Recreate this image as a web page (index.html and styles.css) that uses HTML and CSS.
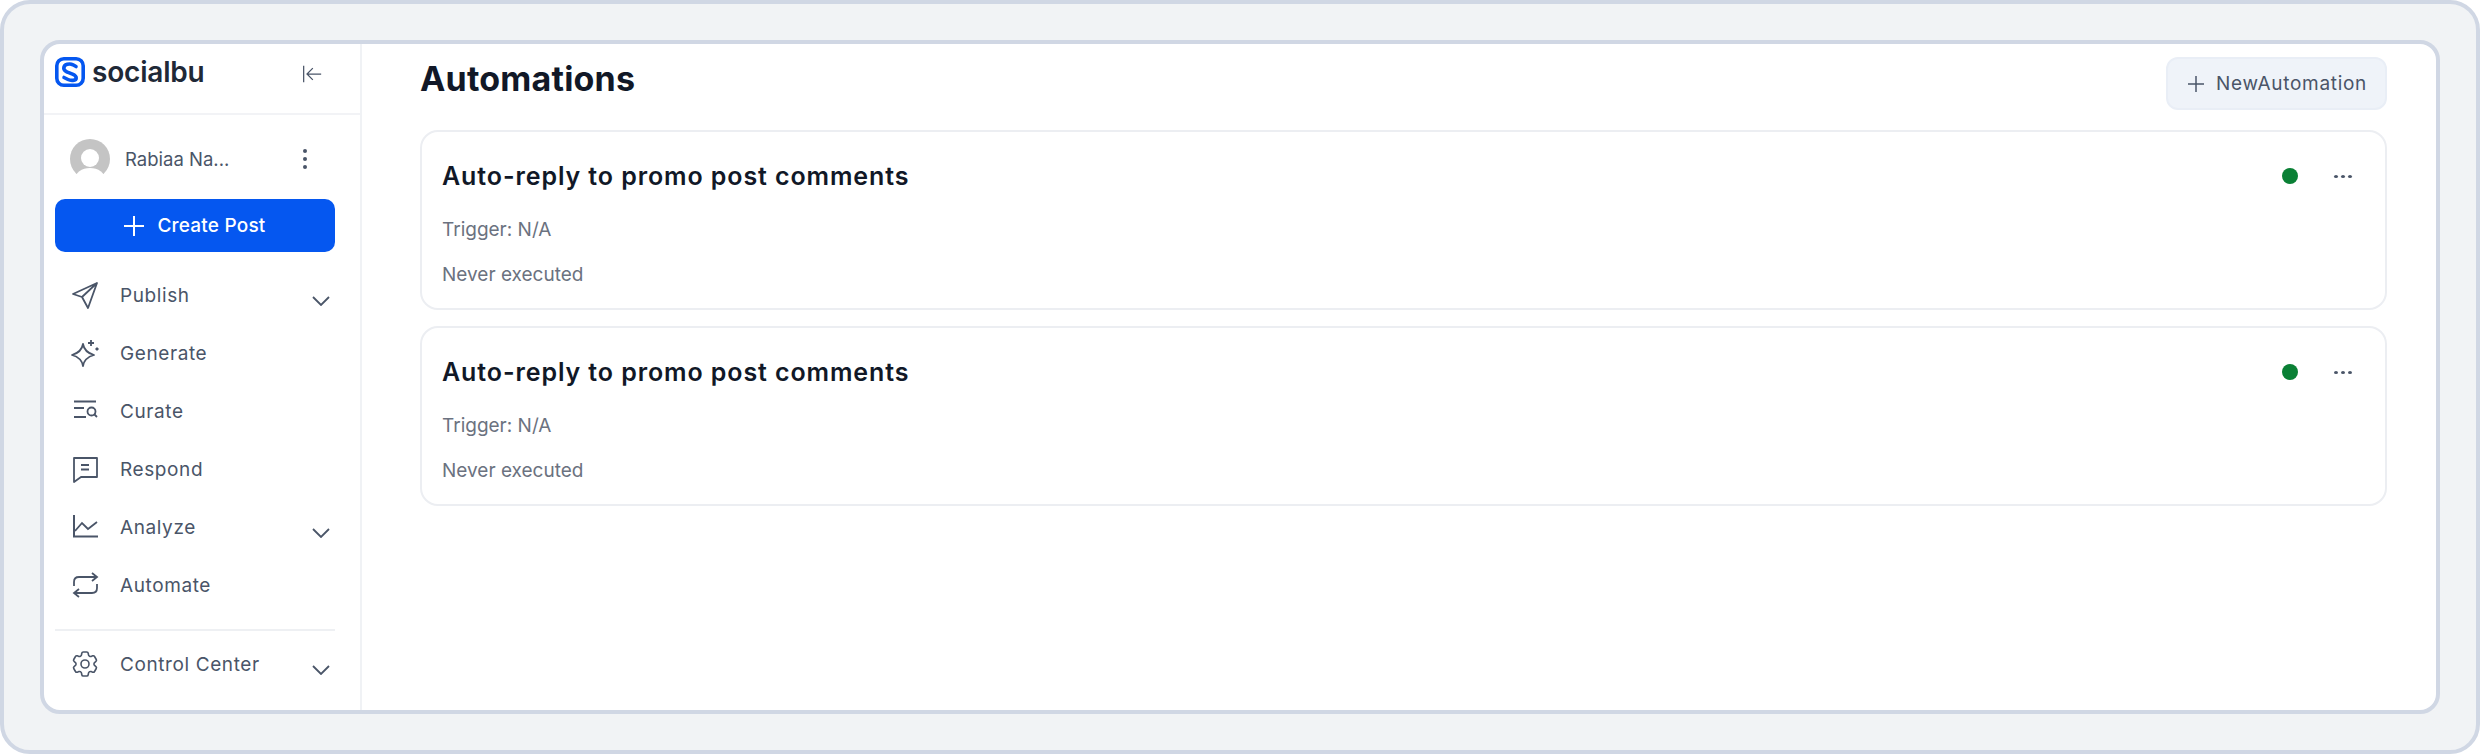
FILE: index.html
```html
<!DOCTYPE html>
<html lang="en">
<head>
    <meta charset="UTF-8">
    <meta name="viewport" content="width=device-width, initial-scale=1.0">
    <title>Automations - SocialBu</title>
    <link rel="stylesheet" href="styles.css">
</head>
<body>
    <div class="frame">
        <div class="app">
            <aside class="sidebar">
                <div class="brand">
                    <svg class="logo" viewBox="0 0 30 30" fill="none">
                        <rect x="1.800" y="1.800" width="26.400" height="26.400" rx="7" stroke="#0557f0" stroke-width="3.600"/>
                        <path d="M21 9.500 L18 7.800 C15 6.200 8.800 7 8.800 11.200 C8.800 13.500 10.500 14.200 12.500 15.200 L17.500 17.200 C19.800 18.200 21.200 19 21.200 21 C21.200 24 15.500 23.800 13 22.500 L9 20.500" stroke="#0557f0" stroke-width="3.600" stroke-linecap="round"/>
                    </svg>
                    <span class="brand-name">socialbu</span>
                    <svg class="collapse" viewBox="0 0 24 24" fill="none" stroke="#4a5568" stroke-width="1.500">
                        <path d="M2 2 V22"/>
                        <path d="M23 12 H6 M13 5 L6 12 L13 19"/>
                    </svg>
                </div>
                <div class="profile">
                    <svg class="avatar" viewBox="0 0 40 40">
                        <circle cx="20" cy="20" r="20" fill="#c4c4c4"/>
                        <circle cx="20" cy="19" r="9" fill="#fff"/>
                        <ellipse cx="20" cy="40" rx="15" ry="11" fill="#fff"/>
                    </svg>
                    <span class="profile-name">Rabiaa Na...</span>
                    <span class="kebab"><i></i><i></i><i></i></span>
                </div>
                <a class="create-btn" href="#">
                    <svg viewBox="0 0 20 20" fill="none" stroke="#fff" stroke-width="2"><path d="M10 0 V20 M0 10 H20"/></svg>
                    Create Post
                </a>
                <nav class="menu">
                    <a class="menu-item" href="#">
                        <svg viewBox="0 0 28 28" fill="none" stroke-linejoin="round"><path d="M26 2 L2 13 L11 16 L17 27 Z M11 16 L26 2"/></svg>
                        <span>Publish</span>
                        <svg class="chevron" viewBox="0 0 18 10" fill="none"><path d="M1 1 L9 9 L17 1"/></svg>
                    </a>
                    <a class="menu-item" href="#">
                        <svg viewBox="0 0 28 28" fill="none" stroke-linejoin="round"><path d="M12 5 C13 11 16 14 23 16 C16 18 13 21 12 27 C11 21 8 18 1 16 C8 14 11 11 12 5 Z"/><path d="M20 1 V7 M17 4 H23"/><path d="M26 8.500 V11.500 M24.500 10 H27.500"/></svg>
                        <span>Generate</span>
                    </a>
                    <a class="menu-item" href="#">
                        <svg viewBox="0 0 28 28" fill="none"><path d="M3 4.500 H25 M3 11 H13 M3 20 H15"/><circle cx="20.500" cy="14.500" r="4"/><path d="M23.500 17.500 L26 20"/></svg>
                        <span>Curate</span>
                    </a>
                    <a class="menu-item" href="#">
                        <svg viewBox="0 0 28 28" fill="none" stroke-linejoin="round"><path d="M3 3 H26 V22 H10 L3 27 Z"/><path d="M10 10 H18 M10 14.500 H18"/></svg>
                        <span>Respond</span>
                    </a>
                    <a class="menu-item" href="#">
                        <svg viewBox="0 0 28 28" fill="none"><path d="M3 2 V23.500 H27" stroke-width="2"/><path d="M4 18 L11 10 L17 16 L26 9"/></svg>
                        <span>Analyze</span>
                        <svg class="chevron" viewBox="0 0 18 10" fill="none"><path d="M1 1 L9 9 L17 1"/></svg>
                    </a>
                    <a class="menu-item" href="#">
                        <svg viewBox="0 0 28 28" fill="none"><path d="M3 15 V11 C3 8 5 6 8 6 H26 M21 2 L26 6 L21 10"/><path d="M26 13 V17 C26 20 24 22 21 22 H3 M8 18 L3 22 L8 26"/></svg>
                        <span>Automate</span>
                    </a>
                    <div class="menu-divider"></div>
                    <a class="menu-item" href="#">
                        <svg class="gear" viewBox="1.500 1.500 21 21" fill="none"><path d="M9.594 3.940c.09-.542.56-.94 1.110-.94h2.593c.55 0 1.020.398 1.110.94l.213 1.281c.063.374.313.686.645.87.074.04.147.083.22.127.325.196.72.257 1.075.124l1.217-.456a1.125 1.125 0 0 1 1.370.49l1.296 2.247a1.125 1.125 0 0 1-.26 1.431l-1.003.827c-.293.241-.438.613-.43.992a7.723 7.723 0 0 1 0 .255c-.008.378.137.75.43.991l1.004.827c.424.35.534.955.26 1.430l-1.298 2.247a1.125 1.125 0 0 1-1.369.491l-1.217-.456c-.355-.133-.75-.072-1.076.124a6.470 6.470 0 0 1-.22.128c-.331.183-.581.495-.644.869l-.213 1.281c-.09.543-.56.94-1.110.94h-2.594c-.55 0-1.019-.398-1.110-.94l-.213-1.281c-.062-.374-.312-.686-.644-.87a6.520 6.520 0 0 1-.22-.127c-.325-.196-.72-.257-1.076-.124l-1.217.456a1.125 1.125 0 0 1-1.369-.49l-1.297-2.247a1.125 1.125 0 0 1 .26-1.431l1.004-.827c.292-.24.437-.613.43-.991a6.932 6.932 0 0 1 0-.255c.007-.38-.138-.751-.43-.992l-1.004-.827a1.125 1.125 0 0 1-.26-1.430l1.297-2.247a1.125 1.125 0 0 1 1.370-.491l1.216.456c.356.133.751.072 1.076-.124.072-.044.146-.086.22-.128.332-.183.582-.495.644-.869l.214-1.280Z"/><circle cx="12" cy="12" r="3"/></svg>
                        <span>Control Center</span>
                        <svg class="chevron" viewBox="0 0 18 10" fill="none"><path d="M1 1 L9 9 L17 1"/></svg>
                    </a>
                </nav>
            </aside>
            <main class="content">
                <div class="page-head">
                    <h1>Automations</h1>
                    <a class="new-btn" href="#">
                        <svg viewBox="0 0 16 16" fill="none" stroke="#4a5568" stroke-width="1.500"><path d="M8 0 V16 M0 8 H16"/></svg>
                        NewAutomation
                    </a>
                </div>
                <div class="card">
                    <div class="card-top">
                        <h2>Auto-reply to promo post comments</h2>
                        <span class="status"></span>
                        <span class="more"><i></i><i></i><i></i></span>
                    </div>
                    <p class="card-line trigger">Trigger: N/A</p>
                    <p class="card-line">Never executed</p>
                </div>
                <div class="card">
                    <div class="card-top">
                        <h2>Auto-reply to promo post comments</h2>
                        <span class="status"></span>
                        <span class="more"><i></i><i></i><i></i></span>
                    </div>
                    <p class="card-line trigger">Trigger: N/A</p>
                    <p class="card-line">Never executed</p>
                </div>
            </main>
        </div>
    </div>
</body>
</html>
```
FILE: styles.css
```css
html, body {
    margin: 0;
    padding: 0;
    background-color: #fff;
}
body {
    font-family: Inter, "Noto Sans", Arial, sans-serif;
    color: #4a5568;
}
a {
    color: inherit;
    text-decoration: none;
}
.frame {
    width: 2480px;
    height: 754px;
    box-sizing: border-box;
    padding: 36px;
    background-color: #f1f3f5;
    border: 4px solid #d0d7e4;
    border-radius: 30px;
}
.app {
    display: flex;
    height: 100%;
    box-sizing: border-box;
    background-color: #fff;
    border: 4px solid #d0d7e4;
    border-radius: 20px;
    overflow: hidden;
}

/* sidebar */
.sidebar {
    width: 318px;
    flex-shrink: 0;
    box-sizing: border-box;
    border-right: 2px solid #f0f2f5;
}
.brand {
    display: flex;
    align-items: center;
    height: 56px;
    padding: 0 0 13px 11px;
    border-bottom: 2px solid #f2f3f6;
}
.logo {
    width: 30px;
    height: 30px;
}
.brand-name {
    margin-left: 7px;
    width: 209px;
    font-size: 28px;
    font-weight: 600;
    letter-spacing: -0.2px;
    color: #1f2937;
}
.collapse {
    width: 22px;
    height: 20px;
    margin-top: 4px;
}
.profile {
    display: flex;
    align-items: center;
    height: 84px;
    padding: 4px 0 0 26px;
    box-sizing: border-box;
}
.avatar {
    width: 40px;
    height: 40px;
}
.profile-name {
    margin-left: 15px;
    width: 178px;
    font-size: 18.500px;
    color: #4a5568;
}
.kebab {
    display: flex;
    flex-direction: column;
    gap: 4px;
}
.kebab i {
    display: block;
    width: 4px;
    height: 4px;
    border-radius: 50%;
    background-color: #4a5568;
}
.create-btn {
    display: flex;
    align-items: center;
    justify-content: center;
    gap: 13px;
    height: 53px;
    margin: 0 25px 0 11px;
    background-color: #0557f0;
    border-radius: 10px;
    color: #fff;
    font-size: 19px;
    font-weight: 500;
    letter-spacing: 0.2px;
}
.create-btn svg {
    width: 20px;
    height: 20px;
}
.menu {
    margin-top: 14px;
    padding: 0 25px 0 11px;
}
.menu-item {
    display: flex;
    align-items: center;
    height: 58px;
    padding-left: 16px;
    font-size: 19px;
    letter-spacing: 0.6px;
    color: #4a5568;
}
.menu-item svg {
    width: 28px;
    height: 28px;
    flex-shrink: 0;
    stroke: #4a5568;
    stroke-width: 1.800;
}
.menu-item .gear {
    stroke-width: 1.200;
}
.menu-item span {
    margin-left: 21px;
    flex: 1;
}
.menu-item .chevron {
    width: 18px;
    height: 10px;
    margin: 12px 5px 0 0;
}
.menu-divider {
    height: 2px;
    margin: 15px 0 4px;
    background-color: #eef0f3;
}

/* main column */
.content {
    flex: 1;
    padding: 13px 49px 0 58px;
}
.page-head {
    display: flex;
    align-items: center;
    justify-content: space-between;
    margin-bottom: 20px;
}
h1 {
    margin: 0 0 11px;
    font-size: 34px;
    font-weight: 700;
    letter-spacing: 0.2px;
    color: #111827;
}
.new-btn {
    display: flex;
    align-items: center;
    gap: 12px;
    height: 53px;
    padding: 0 18px 0 20px;
    box-sizing: border-box;
    background-color: #eff3f9;
    border: 2px solid #e9eef6;
    border-radius: 12px;
    font-size: 19px;
    letter-spacing: 0.7px;
    color: #4a5568;
}
.new-btn svg {
    width: 16px;
    height: 16px;
}
.card {
    height: 180px;
    box-sizing: border-box;
    margin-bottom: 16px;
    padding: 0 20px 0 20px;
    border: 2px solid #eceef2;
    border-radius: 18px;
}
.card-top {
    display: flex;
    align-items: center;
    height: 56px;
    padding-top: 16px;
}
.card-top h2 {
    flex: 1;
    margin: 0;
    font-size: 25px;
    font-weight: 600;
    letter-spacing: 0.9px;
    color: #111827;
}
.status {
    width: 16px;
    height: 16px;
    border-radius: 50%;
    background-color: #0a8035;
}
.more {
    display: flex;
    gap: 3px;
    margin: 0 13px 0 36px;
}
.more i {
    display: block;
    width: 4px;
    height: 3px;
    border-radius: 50%;
    background-color: #4a5568;
}
.card-line {
    margin: 0;
    font-size: 19px;
    line-height: 24px;
    color: #6b7280;
}
.trigger {
    margin: 14px 0 21px;
}
```
